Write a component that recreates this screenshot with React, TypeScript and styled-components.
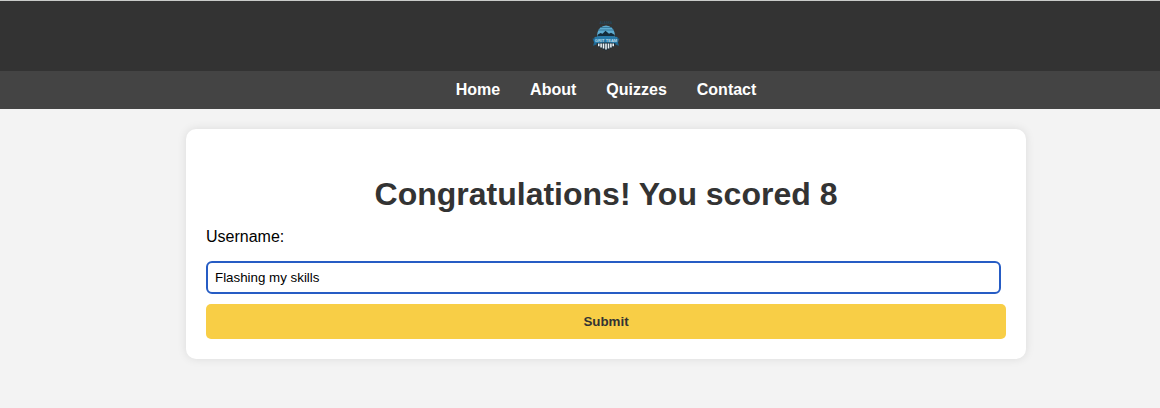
import React, { useState } from "react";
import styled, { createGlobalStyle } from "styled-components";

const GlobalStyle = createGlobalStyle`
  body {
    margin: 0;
    overflow: hidden;
    background: #f3f3f3;
    font-family: "Liberation Sans", Arial, sans-serif;
  }
`;

const Page = styled.div`
  width: 1212px;
  min-height: 408px;
  box-sizing: border-box;
  border-top: 1px solid #c9cbc9;
`;

const Header = styled.header`
  display: flex;
  justify-content: center;
  height: 70px;
  padding-top: 20px;
  box-sizing: border-box;
  background: #333;
`;

const Nav = styled.nav`
  display: flex;
  justify-content: center;
  gap: 30px;
  height: 38px;
  padding-top: 10px;
  box-sizing: border-box;
  background: #444;
`;

const NavLink = styled.a`
  color: #fff;
  font-size: 16px;
  font-weight: bold;
  line-height: 18px;
  text-decoration: none;
`;

const Card = styled.main`
  width: 840px;
  height: 230px;
  margin: 20px auto 0;
  padding: 47px 20px 20px;
  box-sizing: border-box;
  border-radius: 10px;
  background: #fff;
  box-shadow: 0 0 10px rgba(0, 0, 0, 0.1);
`;

const Title = styled.h1`
  margin: 0 0 16px;
  color: #333;
  font-size: 32px;
  line-height: 36px;
  text-align: center;
`;

const Form = styled.form`
  display: flex;
  flex-direction: column;
`;

const Label = styled.label`
  margin-bottom: 15px;
  color: #000;
  font-size: 16px;
  line-height: 18px;
`;

const Input = styled.input`
  width: 795px;
  height: 33px;
  margin: 0 0 10px;
  padding: 0 7px;
  box-sizing: border-box;
  border: 2px solid #265cc4;
  border-radius: 6px;
  outline: none;
  background: #fff;
  color: #000;
  font: 13.333px "Liberation Sans", Arial, sans-serif;
`;

const Submit = styled.button`
  height: 35px;
  padding: 0;
  border: 0;
  border-radius: 5px;
  background: #f8ce46;
  color: #333;
  font: bold 13.333px "Liberation Sans", Arial, sans-serif;
`;

const LogoImage = styled.svg`
  display: block;
  overflow: visible;
`;

const LogoText = styled.text`
  font-family: "Liberation Sans", Arial, sans-serif;
  font-weight: bold;
  text-anchor: middle;
`;

const Logo = () => (
  <LogoImage width="30" height="30" viewBox="0 0 30 30">
    <LogoText x="15" y="3.4" fontSize="3" fill="#24475c">ALASKA</LogoText>
    <path d="M6 16q0-6 3-9 2.500-2.600 6-2.600t6 2.600q3 3 3 9z" fill="#5eabd0" />
    <path d="M9 6.500h12M7 9h16" stroke="#2d6d8e" strokeWidth="0.8" />
    <path d="M6 15.500l1-2 2.500-1.500 2 .8 3-3 3.500 3 2-1 3.500 2 .5 1.700z" fill="#142b3a" />
    <path d="M5.500 21h19q-.5 5.500-9.500 8.500-9-3-9.500-8.500z" fill="#182c39" />
    <path d="M7.800 22.500v2.800M10.100 22.500v4M12.500 22.500v5M15 22.500v6M17.500 22.500v5M19.900 22.500v4M22.200 22.500v2.800" stroke="#eaf2f5" strokeWidth="1.600" />
    <path d="M1.500 17.500h4v6.300l-3.500 1 1-3.300zM28.500 17.500h-4v6.300l3.500 1-1-3.300z" fill="#1e638b" />
    <path d="M3.500 16q11.500-2 23 0v6.500q-11.500-2-23 0z" fill="#2779a8" />
    <LogoText x="15" y="20.500" fontSize="4.100" fill="#b9d9e9">GRIT TEAM</LogoText>
  </LogoImage>
);

const links = ["Home", "About", "Quizzes", "Contact"];

export default function App() {
  const [username, setUsername] = useState("Flashing my skills");
  return (
    <Page>
      <GlobalStyle />
      <Header>
        <Logo />
      </Header>
      <Nav>
        {links.map((label) => (
          <NavLink key={label} href="#">{label}</NavLink>
        ))}
      </Nav>
      <Card>
        <Title>Congratulations! You scored 8</Title>
        <Form onSubmit={(e) => e.preventDefault()}>
          <Label htmlFor="username">Username:</Label>
          <Input
            id="username"
            spellCheck={false}
            value={username}
            onChange={(e) => setUsername(e.target.value)}
          />
          <Submit type="submit">Submit</Submit>
        </Form>
      </Card>
    </Page>
  );
}
